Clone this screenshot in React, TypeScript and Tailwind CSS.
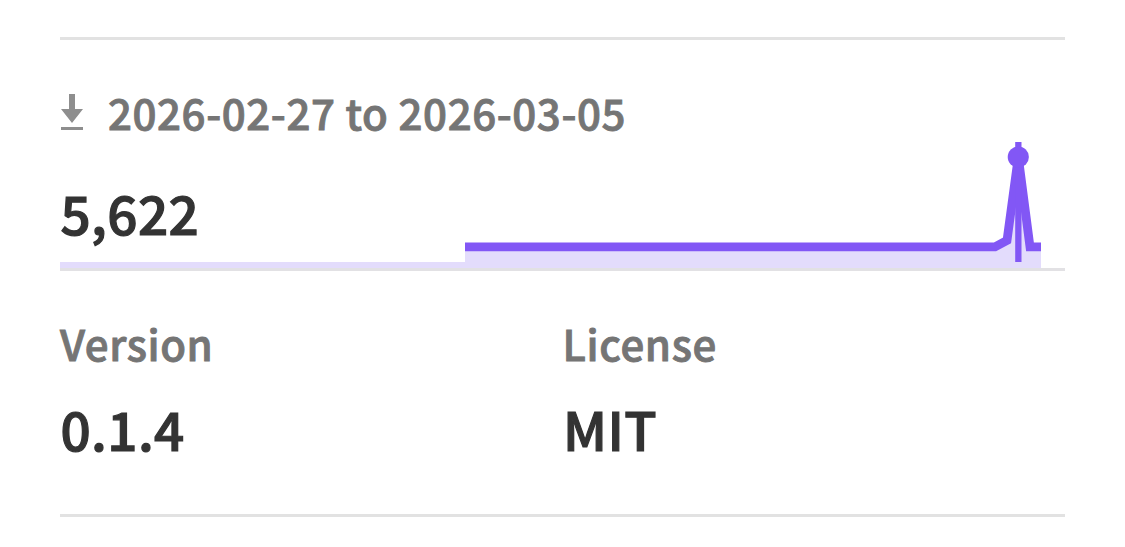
const LABEL = "text-[42px] leading-[50px] font-medium tracking-[0.6px] text-[#757575] whitespace-nowrap [-webkit-text-stroke:0.9px_#757575]";
const VALUE = "pl-[0.5px] text-[53px] leading-[60px] font-medium tracking-[0.4px] text-[#333333] whitespace-nowrap [-webkit-text-stroke:1.2px_#333333]";

function DownloadIcon() {
  return (
    <svg width="22" height="36" viewBox="0 0 22 36" fill="#8e8e8e" className="shrink-0">
      <path d="M8 0h6v15h8L11 29 0 15h8z" />
      <path d="M0 33h22v3H0z" />
    </svg>
  );
}

function Sparkline() {
  return (
    <svg width="1005" height="132" viewBox="60 139 1005 132" className="block">
      <path d="M60 262H465V268H60zM465 247H995L1007 241L1018 157L1030 247H1041V268H465z" fill="#e3dcfc" />
      <path d="M60 268H1065V271H60z" fill="#e2e1e4" />
      <path
        d="M465 246.8H995L1007 240.5L1018.3 157L1030 246.8H1041"
        fill="none"
        stroke="#8257f5"
        strokeWidth="8.8"
      />
      <path d="M1015.2 142h6.3v120h-6.3z" fill="#8257f5" />
      <circle cx="1018.3" cy="157" r="10.6" fill="#8257f5" />
    </svg>
  );
}

function Stat({ label, value }: { label: string; value: string }) {
  return (
    <div className="w-1/2">
      <h3 className={LABEL}>{label}</h3>
      <p className={VALUE + " mt-[30px]"}>{value}</p>
    </div>
  );
}

export default function App() {
  return (
    <div className="h-[547px] w-[1125px] overflow-hidden bg-white px-[60px] pt-[37px] font-['Noto_Sans_CJK_SC',sans-serif]">
      <div className="h-[480px] border-y-[3px] border-[#e2e2e2]">
        <div className="grid h-[231px] grid-cols-1 grid-rows-1">
          <div className="col-start-1 row-start-1 self-end">
            <Sparkline />
          </div>
          <div className="col-start-1 row-start-1 pt-[47px]">
            <div className="flex h-[50px] items-start gap-[25px]">
              <div className="ml-px pt-[7px]"><DownloadIcon /></div>
              <h3 className={LABEL}>2026-02-27 to 2026-03-05</h3>
            </div>
            <p className={VALUE + " mt-[45px]"}>5,622</p>
          </div>
        </div>
        <div className="flex pt-[47px]">
          <Stat label="Version" value="0.1.4" />
          <Stat label="License" value="MIT" />
        </div>
      </div>
    </div>
  );
}
